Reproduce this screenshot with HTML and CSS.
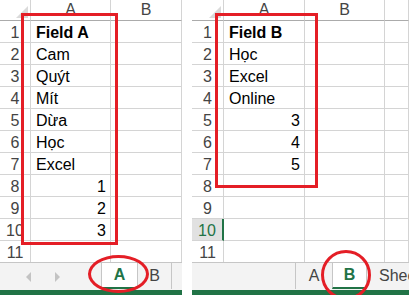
FILE: index.html
```html
<!DOCTYPE html>
<html>
<head>
    <title>Field A / Field B</title>
    <link rel="stylesheet" href="styles.css">
</head>
<body>
    <div class="screen">
        <!-- Sheet A -->
        <div class="sheet sheet-a">
            <div class="grid grid-a">
                <div class="cell corner"><span class="tri"></span></div>
                <div class="cell col-head">A</div>
                <div class="cell col-head">B</div>

                <div class="cell row-head">1</div><div class="cell bold">Field A</div><div class="cell"></div>
                <div class="cell row-head">2</div><div class="cell">Cam</div><div class="cell"></div>
                <div class="cell row-head">3</div><div class="cell">Quýt</div><div class="cell"></div>
                <div class="cell row-head">4</div><div class="cell">Mít</div><div class="cell"></div>
                <div class="cell row-head">5</div><div class="cell">Dừa</div><div class="cell"></div>
                <div class="cell row-head">6</div><div class="cell">Học</div><div class="cell"></div>
                <div class="cell row-head">7</div><div class="cell">Excel</div><div class="cell"></div>
                <div class="cell row-head">8</div><div class="cell num">1</div><div class="cell"></div>
                <div class="cell row-head">9</div><div class="cell num">2</div><div class="cell"></div>
                <div class="cell row-head">10</div><div class="cell num">3</div><div class="cell"></div>
                <div class="cell row-head">11</div><div class="cell"></div><div class="cell"></div>
            </div>
            <div class="tabs">
                <div class="tab-nav">
                    <span class="arrow arrow-left"></span>
                    <span class="arrow arrow-right"></span>
                </div>
                <div class="tab tab-active tab-a1">A</div>
                <div class="tab tab-b1">B</div>
            </div>
            <div class="status"></div>
            <div class="mark mark-box box-a"></div>
            <div class="mark mark-ring ring-a"></div>
        </div>

        <!-- Sheet B -->
        <div class="sheet sheet-b">
            <div class="grid grid-b">
                <div class="cell corner"><span class="tri"></span></div>
                <div class="cell col-head">A</div>
                <div class="cell col-head">B</div>
                <div class="cell col-head"></div>

                <div class="cell row-head">1</div><div class="cell bold">Field B</div><div class="cell"></div><div class="cell"></div>
                <div class="cell row-head">2</div><div class="cell">Học</div><div class="cell"></div><div class="cell"></div>
                <div class="cell row-head">3</div><div class="cell">Excel</div><div class="cell"></div><div class="cell"></div>
                <div class="cell row-head">4</div><div class="cell">Online</div><div class="cell"></div><div class="cell"></div>
                <div class="cell row-head">5</div><div class="cell num">3</div><div class="cell"></div><div class="cell"></div>
                <div class="cell row-head">6</div><div class="cell num">4</div><div class="cell"></div><div class="cell"></div>
                <div class="cell row-head">7</div><div class="cell num">5</div><div class="cell"></div><div class="cell"></div>
                <div class="cell row-head">8</div><div class="cell"></div><div class="cell"></div><div class="cell"></div>
                <div class="cell row-head">9</div><div class="cell"></div><div class="cell"></div><div class="cell"></div>
                <div class="cell row-head row-sel">10</div><div class="cell"></div><div class="cell"></div><div class="cell"></div>
                <div class="cell row-head">11</div><div class="cell"></div><div class="cell"></div><div class="cell"></div>
            </div>
            <div class="tabs">
                <div class="tab-space"></div>
                <div class="tab tab-a2">A</div>
                <div class="tab tab-active tab-b2">B</div>
                <div class="tab tab-sheet">Sheet1</div>
            </div>
            <div class="status"></div>
            <div class="mark mark-box box-b"></div>
            <div class="mark mark-ring ring-b"></div>
        </div>
    </div>
</body>
</html>
```

FILE: styles.css
```css
body { margin: 0; background: #fff; font-family: "Liberation Sans", Arial, sans-serif; }
.screen { display: flex; gap: 10px; width: 409px; height: 295px; overflow: hidden; }

.sheet { position: relative; display: flex; flex-direction: column; height: 295px; overflow: hidden; flex-shrink: 0; }
.sheet-a { width: 182px; }
.sheet-b { width: 217px; }

.grid { display: grid; grid-template-rows: 21px; grid-auto-rows: 22px; height: 262px; overflow: hidden; }
.grid-a { grid-template-columns: 31px 80px 71px; }
.grid-b { grid-template-columns: 32px 81px 80px 24px; }

.cell {
    box-sizing: border-box;
    border-right: 1px solid #d4d4d4;
    border-bottom: 1px solid #d4d4d4;
    display: flex;
    align-items: flex-end;
    padding: 0 4px 0 5px;
    font-size: 16px;
    line-height: 18px;
    color: #000;
    white-space: nowrap;
    overflow: hidden;
}
.bold { font-weight: bold; }
.num { justify-content: flex-end; }

.corner { justify-content: flex-end; padding: 0 2px 2px 0; border-bottom-color: #ababab; }
.tri {
    width: 0; height: 0;
    border-left: 12px solid transparent;
    border-bottom: 12px solid #dadada;
}
.col-head { justify-content: center; align-items: center; color: #444; border-bottom-color: #ababab; padding: 0; }
.row-head { justify-content: center; color: #444; padding: 0; }
.row-sel { background: #e1e1e1; color: #217346; border-right: 2px solid #217346; }

.tabs {
    display: flex;
    height: 28px;
    box-sizing: border-box;
    background: #f3f3f3;
    border-top: 1px solid #c6c6c6;
    font-size: 16px;
    color: #444;
    overflow: hidden;
}
.tabs > div { flex-shrink: 0; }
.tab-nav { width: 101px; display: flex; align-items: center; gap: 24px; padding-left: 26px; box-sizing: border-box; }
.arrow { width: 0; height: 0; border-top: 5px solid transparent; border-bottom: 5px solid transparent; }
.arrow-left { border-right: 5px solid #c3c3c3; }
.arrow-right { border-left: 5px solid #c3c3c3; }
.tab-space { width: 103px; }

.tab {
    box-sizing: border-box;
    display: flex;
    align-items: center;
    justify-content: center;
    height: 26px;
    border-left: 1px solid #c6c6c6;
}
.tab-active {
    background: #fff;
    color: #217346;
    font-weight: bold;
    border-bottom: 2px solid #217346;
}
.tab-a1 { width: 36px; }
.tab-b1 { width: 35px; border-right: 1px solid #c6c6c6; }
.tab-a2 { width: 37px; }
.tab-b2 { width: 34px; }
.tab-sheet { width: 60px; justify-content: flex-start; padding-left: 12px; }

.status { height: 5px; background: #217346; }

.mark { position: absolute; box-sizing: border-box; border: 3px solid #e41e26; }
.box-a { left: 21px; top: 13px; width: 97px; height: 232px; }
.box-b { left: 23px; top: 13px; width: 103px; height: 175px; }
.mark-ring { border-radius: 50%; }
.ring-a { left: 88px; top: 255px; width: 61px; height: 38px; }
.ring-b { left: 129px; top: 250px; width: 50px; height: 50px; }
```
